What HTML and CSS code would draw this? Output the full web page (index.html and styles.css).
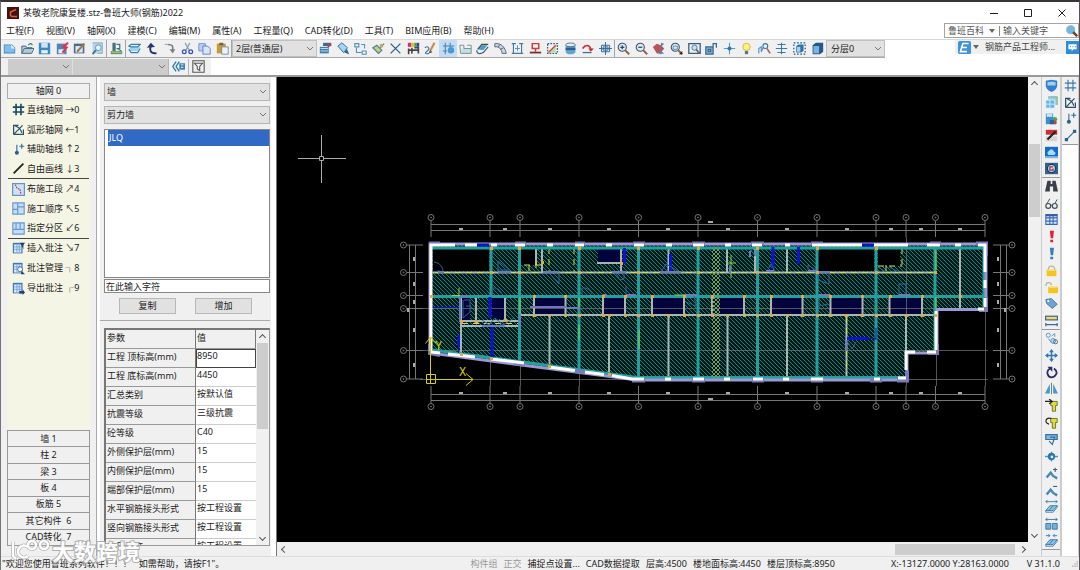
FILE: index.html
```html
<!DOCTYPE html>
<html lang="zh-CN">
<head>
<meta charset="utf-8">
<title>某敬老院康复楼.stz-鲁班大师(钢筋)2022</title>
<link rel="stylesheet" href="styles.css">
</head>
<body>
<div class="app">
  <header class="titlebar">
    <svg class="app-logo" viewBox="0 0 12 12" aria-hidden="true"><rect width="12" height="12" fill="#3a1713"/><path d="M9 2.500L3.500 5v3.500L5 9.500h5" fill="none" stroke="#f0562f" stroke-width="1.500"/></svg>
    <h1 class="title">某敬老院康复楼.stz-鲁班大师(钢筋)2022</h1>
    <div class="window-buttons">
      <button class="win" aria-label="最小化"><svg viewBox="0 0 10 10"><path d="M1 5.500h8"/></svg></button>
      <button class="win" aria-label="最大化"><svg viewBox="0 0 10 10"><path d="M1.500 1.500h7v7h-7z"/></svg></button>
      <button class="win" aria-label="关闭"><svg viewBox="0 0 10 10"><path d="M1.500 1.500l7 7m0-7l-7 7"/></svg></button>
    </div>
  </header>

  <div class="menu-row">
    <nav class="menu">
      <button>工程(F)</button><button>视图(V)</button><button>轴网(X)</button><button>建模(C)</button><button>编辑(M)</button><button>属性(A)</button><button>工程量(Q)</button><button>CAD转化(D)</button><button>工具(T)</button><button>BIM应用(B)</button><button>帮助(H)</button>
    </nav>
    <form class="search">
      <button type="button" class="search-kind">鲁班百科<span class="tri"></span></button>
      <input class="search-input" aria-label="输入关键字" placeholder="输入关键字">
      <button type="button" class="icon-btn" data-icon="search" aria-label="搜索"></button>
    </form>
  </div>

  <div class="tool-row">
    <div class="toolbar">
      <div class="group g-file">
        <button data-icon="new" aria-label="新建"></button><button data-icon="open" aria-label="打开"></button><button data-icon="save" aria-label="保存"></button><button data-icon="saveflash" aria-label="快速保存"></button><button data-icon="edit" aria-label="编辑"></button><button data-icon="preview" aria-label="预览"></button>
      </div>
      <div class="group g-one"><button data-icon="project" aria-label="工程"></button></div>
      <div class="group g-file">
        <button data-icon="layers" aria-label="图层"></button><button data-icon="undo" aria-label="撤销"></button><button data-icon="redo" aria-label="重做"></button><button data-icon="cut" aria-label="剪切"></button><button data-icon="copy" aria-label="复制"></button><button data-icon="paste" aria-label="粘贴"></button>
      </div>
      <select class="floor" aria-label="楼层"><option>2层(普通层)</option></select>
      <div class="group g-edit">
        <button data-icon="props" aria-label="属性"></button><button data-icon="tag" aria-label="标签"></button><button data-icon="flow" aria-label="关系"></button><button data-icon="brush" aria-label="格式刷"></button><button data-icon="cross" aria-label="删除"></button><button data-icon="palette" aria-label="颜色"></button><button data-icon="pencil" aria-label="绘制"></button><button class="on" data-icon="gridshape" aria-label="轴网"></button><button data-icon="slab" aria-label="板"></button><button data-icon="book" aria-label="图集"></button><button data-icon="fan" aria-label="弧形"></button><button data-icon="beam" aria-label="梁"></button><button data-icon="stamp" aria-label="柱"></button><button data-icon="region" aria-label="区域"></button><button data-icon="barrel" aria-label="数据"></button><button data-icon="arcarrow" aria-label="旋转"></button><button data-icon="target" aria-label="定位"></button>
      </div>
      <div class="group g-view">
        <button data-icon="zoomin" aria-label="放大"></button><button data-icon="zoomout" aria-label="缩小"></button><button data-icon="hand" aria-label="平移"></button><button data-icon="zoomwin" aria-label="窗口缩放"></button><button data-icon="zoompart" aria-label="全图"></button><button data-icon="unlock" aria-label="解锁"></button><button data-icon="point" aria-label="点"></button><button data-icon="bulb" aria-label="显示"></button><button data-icon="find" aria-label="查找"></button><button data-icon="axis" aria-label="轴线"></button><button data-icon="boxdash" aria-label="局部"></button><button data-icon="box" aria-label="三维"></button>
      </div>
      <select class="layer" aria-label="分层"><option>分层0</option></select>
    </div>
    <div class="account">
      <span class="icon-btn" data-icon="elogo"></span><span class="tri"></span>
      <a href="#" class="account-name">钢筋产品工程师...</a>
      <button class="icon-btn" data-icon="chat" aria-label="消息"></button>
    </div>
  </div>

  <div class="filter-row">
    <select class="off short" disabled aria-label="构件大类"></select><select class="off" disabled aria-label="构件小类"></select>
    <button class="filter-btn" data-icon="collapse" aria-label="收起"></button>
    <button class="filter-btn" data-icon="funnel" aria-label="筛选"></button>
  </div>

  <main class="work">
    <aside class="side">
      <button class="cat">轴网 0</button>
      <ul class="cmds">
        <li><button><i data-icon="hash"></i>直线轴网 →0</button></li>
        <li><button><i data-icon="arcgrid"></i>弧形轴网 ←1</button></li>
        <li><button><i data-icon="aux"></i>辅助轴线 ↑2</button></li>
        <li class="rule"><button><i data-icon="freeline"></i>自由画线 ↓3</button></li>
        <li><button><i data-icon="section"></i>布施工段 ↗4</button></li>
        <li><button><i data-icon="order"></i>施工顺序 ↖5</button></li>
        <li class="rule"><button><i data-icon="zone"></i>指定分区 ↙6</button></li>
        <li><button><i data-icon="note1"></i>插入批注 ↘7</button></li>
        <li><button><i data-icon="note2"></i>批注管理 ┐8</button></li>
        <li><button><i data-icon="note3"></i>导出批注 ┌9</button></li>
      </ul>
      <div class="cats">
        <button class="cat">墙 1</button><button class="cat">柱 2</button><button class="cat">梁 3</button><button class="cat">板 4</button><button class="cat">板筋 5</button><button class="cat">其它构件&nbsp; 6</button><button class="cat">CAD转化&nbsp; 7</button>
      </div>
    </aside>

    <section class="panel">
      <div class="panel-top">
        <select class="combo" aria-label="构件"><option>墙</option></select>
        <select class="combo" aria-label="类型"><option>剪力墙</option></select>
        <ul class="list"><li class="picked">JLQ</li></ul>
        <input class="name-input" aria-label="构件名称" value="在此输入字符">
        <div class="actions"><button>复制</button><button>增加</button></div>
      </div>
      <div class="params">
        <table>
          <thead><tr><th>参数</th><th>值</th></tr></thead>
          <tbody>
            <tr class="current"><th>工程 顶标高(mm)</th><td>8950</td></tr>
            <tr><th>工程 底标高(mm)</th><td>4450</td></tr>
            <tr><th>汇总类别</th><td>按默认值</td></tr>
            <tr><th>抗震等级</th><td>三级抗震</td></tr>
            <tr><th>砼等级</th><td>C40</td></tr>
            <tr><th>外侧保护层(mm)</th><td>15</td></tr>
            <tr><th>内侧保护层(mm)</th><td>15</td></tr>
            <tr><th>端部保护层(mm)</th><td>15</td></tr>
            <tr><th>水平钢筋接头形式</th><td>按工程设置</td></tr>
            <tr><th>竖向钢筋接头形式</th><td>按工程设置</td></tr>
            <tr><th>定尺长度</th><td>按工程设置</td></tr>
          </tbody>
        </table>
        <div class="vbar"><span class="chev up"></span><span class="thumb t-params"></span><span class="chev down"></span></div>
      </div>
    </section>

    <section class="view">
      <div class="canvas-row">
        <svg class="canvas" viewBox="277 77 751 464" preserveAspectRatio="xMinYMin meet">
          <defs>
            <pattern id="hatch" width="4" height="4" patternUnits="userSpaceOnUse"><rect width="4" height="4" fill="#021817"/><path d="M-1 -1L5 5M-1 3L1 5M3 -1L5 1" stroke="#11857e" stroke-width="1"/></pattern>
            <pattern id="mesh" width="4" height="4" patternUnits="userSpaceOnUse"><path d="M0 0L4 4M4 0L0 4" stroke="#6f9c68" stroke-width="1"/></pattern>
          </defs>
          <g id="axes" class="axes"></g>
          <path class="floor-area" d="M431 245H986V309H936V352H906V379H637L431 352Z"/>
          <path class="void" d="M433 249H489V271H433ZM521 249H536V265H521ZM818 249H874V271H818ZM878 249H900V266H878Z"/>
          <path class="navy" d="M598 248H620V263H598ZM461 297H470V321H461ZM492 297H504V319H492ZM534 297H565V314H534ZM603 297H625V314H603ZM653 297H683V314H653ZM719 297H743V314H719ZM772 297H802V314H772ZM831 297H862V314H831ZM890 297H921V314H890Z"/>
          <path class="grid-over" d="M420 308.500H988M420 350.500H988M420 379.500H988M490.500 360V386M520.500 365V386M579.500 372V386M906.500 237V386M936.500 310V386M985.500 310V386"/>
          <path class="wall" d="M433 272.500H935M520 315H935M549.500 315V367M609 315V375M668.500 315V378M727.500 315V378M787 315V378M846.500 315V378M906 315V352M960 247V308M461 297V355M536 247V265M542 247V272M621 247V272M597 263H621M668.500 247V272M727 247V272M755 247V272M787 247V272M461 321H520M461 326H520M476 297V321M505 297V320M534 297V315M565.500 297V315M603 297V315M625 297V315M652 297V315M684 297V315M712 297V315M744 297V315M771 297V315M802.500 297V315M830.500 297V315M862.500 297V315M889.500 297V315M922 297V315"/>
          <path class="dash" d="M433 272.500H935M462 323.500H518M574 248V272M549 248V272M902 248V268M935 248V272M878 266H902M886 265V273M536 262V272M529 265V272M846.500 317V374M524 265H542M431 297V345"/>
          <path class="teal" d="M432 248H984M432 296.500H984M491 247V298M519.500 247V362M579 247V370M638.500 247V378M698 247V378M757.500 247V378M817 247V378M876 247V378M935 247V352M984 247V306M638 377.500H905M433 350L637 377.500"/>
          <path class="lime" d="M579 298V308M579 325V340M639 330V349M520 297V318M936 250V270M936 297V308M459 288V297M452 295.500H461M675 295H684M731 255V278M726 263H736"/>
          <rect class="mesh" x="712" y="247" width="8" height="131"/>
          <path class="blue" d="M624.500 248V264M670.500 254V271M773 247V269M798.500 247V264M847 338.500H868M458.500 335V346M490 297V318M492 325V358"/>
          <path class="blue thin" d="M433 307.500H458M868 338.500H876M876 328V340M458.500 346V353"/>
          <path class="door" d="M434 272A10 10 0 0 1 443 272M434 262C440 263 443 267 443 272M498 272V261L510 270H498M548 272L559 284V272M492 294V288A9 9 0 0 1 502 294M582 294V288A9 9 0 0 1 592 294M626 296V286L635 295M615 272L620 280L624 279V272M661 272L666 264L678 271M683 295H694L696 306L686 302M730 272V264M751 250L755 256V250M767 271L771 264L775 271M808 270V265L816 270M818 272V280L829 284V272M819 298V306L828 304M899 295V284L906 284V294M847 341L852 349L856 342M878 267L886 272M889 267L899 272M464 300H470V312L463 318V300M466 306H471M482 320L489 325L495 318L503 325L514 318"/>
          <path class="violet" d="M460 296V322M460 296H468M438 272H444M498 272H511M543 272H558M603 295H607M612 272H626M660 272H681M626 295H636M683 295H697M530 307H567M567 308H580M750 251V257M766 271H774M808 271H817M819 295H830M899 295H910M846 340V351M520 314V326M817 272H830M482 326H505M730 266V274"/>
          <path class="outer" d="M430 244H986V309.500H937V353H907V380H637L430 353Z"/>
          <path class="outer-thick" d="M429 243.500H440M515 243.500H526M575 243.500H585M633 243.500H645M692 243.500H705M751 243.500H764M811 243.500H823M930 243.500H941M976 243.500H986V256M986 297V310H979M430 344V353L440 355M514 363L525 365M574 371L585 372M632 380.500H645M692 380.500H705M752 380.500H764M811 380.500H823M870 380.500H882M897 380.500H907V371M937 344V353H928"/>
          <path class="outer-core" d="M431 351V245H455M465 245H477M491 245H497M515 245H525M547 245H553M575 245H584M606 245H612M634 245H644M666 245H672M693 245H704M725 245H731M752 245H762M785 245H790M812 245H862M873 245H908M927 245H940M955 245H961M978 245H985V272M985 280V288M985 298V307M978 309H984M936 311V350M936 352H927M915 352H906V370M906 378H898M880 379H874M823 379H811M789 379H783M763 379H753M730 379H724M704 379H693M671 379H665M644 379H632L612 375.500M604 374.500L585 372M575 370.500L549 367M524 363L491 359M475 357L448 354M440 353L431 352"/>
          <path class="blue" d="M477 245H489M862 245H874"/>
          <g id="joints" class="joints"></g>
          <g class="ucs"><path d="M426.500 374.500H435.500V383.500H426.500ZM430.500 383V337M427 379.500H473M466 373.500L473 379.500L466 385.500M425.500 343.500L430.500 337L436.500 343.500"/><text x="459" y="376">X</text><text x="435" y="350">Y</text></g>
          <path class="cursor" d="M298 158.500H319M324 158.500H346M321.500 135V156M321.500 161V183M319.500 156.500H323.500V160.500H319.500Z"/>
        </svg>
        <div class="vbar"><span class="chev up"></span><span class="thumb t-view"></span><span class="chev down"></span></div>
      </div>
      <div class="hbar"><span class="chev left"></span><span class="thumb"></span><span class="chev right"></span></div>
    </section>

    <div class="rail">
      <div class="rail-group six">
        <button data-icon="shield" aria-label="云检查"></button><button data-icon="windows" aria-label="窗口"></button><button data-icon="dbcheck" aria-label="数据库"></button><button data-icon="redpen" aria-label="批注"></button><button data-icon="cloud" aria-label="云"></button><button data-icon="refresh" aria-label="更新"></button>
      </div>
      <div class="rail-group nine">
        <button data-icon="binoc" aria-label="查找"></button><button data-icon="glasses" aria-label="查看"></button><button data-icon="table" aria-label="表格"></button><button data-icon="exclred" aria-label="计算"></button><button data-icon="exclblue" aria-label="单构件计算"></button><button data-icon="lock" aria-label="锁定"></button><button data-icon="lockopen" aria-label="解锁"></button><button data-icon="label" aria-label="标签"></button><button data-icon="ruler" aria-label="测量"></button>
      </div>
      <div class="rail-group thirteen">
        <button data-icon="circles" aria-label="复制"></button><button data-icon="move" aria-label="移动"></button><button data-icon="rotate" aria-label="旋转"></button><button data-icon="mirror" aria-label="镜像"></button><button data-icon="extend" aria-label="延伸"></button><button data-icon="trim" aria-label="修剪"></button><button data-icon="offset" aria-label="偏移"></button><button data-icon="node" aria-label="节点"></button><button data-icon="addnode" aria-label="加节点"></button><button data-icon="delnode" aria-label="减节点"></button><button data-icon="stretch" aria-label="拉伸"></button><button data-icon="split" aria-label="打断"></button><button data-icon="merge" aria-label="合并"></button>
      </div>
    </div>
    <div class="rail second">
      <div class="rail-group four">
        <button data-icon="hashblue" aria-label="直线轴网"></button><button data-icon="arcgrid" aria-label="弧形轴网"></button><button data-icon="aux" aria-label="辅助轴线"></button><button data-icon="segment" aria-label="自由画线"></button>
      </div>
    </div>
  </main>

  <footer class="status">
    <span class="hint">"欢迎您使用鲁班系列软件！！！&nbsp;&nbsp; 如需帮助，请按F1"。</span>
    <div class="fields">
      <span class="dim">构件组</span><span class="dim">正交</span><span>捕捉点设置...</span><span>CAD数据提取</span><span>层高:4500</span><span>楼地面标高:4450</span><span>楼层顶标高:8950</span>
    </div>
    <span class="coords">X:-13127.0000 Y:28163.0000</span>
    <span class="version">V 31.1.0</span>
    <svg class="grip" viewBox="0 0 8 8"><path d="M6 0h2v2H6zM3 3h2v2H3zM6 3h2v2H6zM0 6h2v2H0zM3 6h2v2H3zM6 6h2v2H6z" fill="#bbb"/></svg>
  </footer>

  <div class="watermark" aria-hidden="true">
    <svg viewBox="0 0 42 22"><g fill="none" stroke="#aaa" stroke-width="4"><path d="M3 3v14l3 3M18 8a6 6 0 1 0 0 9"/><circle cx="22" cy="6" r="4"/><circle cx="34" cy="6" r="4"/></g><g fill="none" stroke="#fff" stroke-width="2.500"><path d="M3 3v14l3 3M18 8a6 6 0 1 0 0 9"/><circle cx="22" cy="6" r="4"/><circle cx="34" cy="6" r="4"/></g></svg>
    <span>大数跨境</span>
  </div>
</div>
<script src="app.js"></script>
</body>
</html>
```
FILE: styles.css
```css
* { box-sizing: border-box; }
html, body { height: 100%; margin: 0; }
body { font: 9px/12px "Noto Sans", "Noto Sans CJK SC", sans-serif; color: #222; background: #fff; overflow: hidden; }
button, input, select { font: inherit; color: inherit; margin: 0; padding: 0; border: 0; background: none; border-radius: 0; }
ul { list-style: none; margin: 0; padding: 0; }
svg { display: block; }

.app { position: relative; height: 100vh; display: flex; flex-direction: column; border-top: 2px solid #37343a; border-left: 1px solid #77727a; border-right: 1px solid #55525a; }

.titlebar { flex: 0 0 21px; display: flex; align-items: center; gap: 4px; padding-left: 6px; }
.app-logo { width: 12px; height: 12px; }
.title { font: inherit; margin: 0; flex: 1; }
.window-buttons { display: flex; gap: 14px; padding-right: 7px; }
.win { width: 20px; height: 18px; display: grid; place-items: center; }
.win svg { width: 10px; height: 10px; fill: none; stroke: #222; stroke-width: 1; }

.menu-row { flex: 0 0 16px; display: flex; justify-content: space-between; }
.menu { display: flex; gap: 12px; padding-left: 5px; }
.menu button { white-space: nowrap; }
.search { display: flex; align-items: center; width: 135px; height: 15px; border: 1px solid #a5a5a5; color: #555; background: #fff; }
.search-kind { display: flex; align-items: center; gap: 5px; padding: 0 4px 0 3px; border-right: 1px solid #888; height: 10px; }
.tri { border: 3px solid transparent; border-top: 4px solid #666; border-bottom: 0; }
.search-input { flex: 1; min-width: 0; padding-left: 3px; outline: 0; }
.search-input::placeholder { color: #555; opacity: 1; }
.icon-btn { width: 14px; height: 13px; flex: none; display: grid; place-items: center; }

.tool-row { flex: 0 0 19px; display: flex; justify-content: space-between; align-items: flex-start; border-top: 1px solid #d8d8d8; }
.toolbar { display: flex; height: 18px; background: #f0f0f0; border-bottom: 1px solid #a8a8a8; }
.group { display: flex; border-right: 1px solid #a5a5a5; }
.group button { flex: 1; display: grid; place-items: center; }
.group .on { background: #c3dcf5; }
.g-file { width: 106px; }
.g-one { width: 19px; }
.g-edit { width: 298px; }
.g-view { width: 211px; border-right: 0; }
.toolbar svg, .icon-btn svg { width: 13px; height: 13px; }

select { appearance: none; background: #e1e1e1 url("data:image/svg+xml,%3Csvg xmlns='http://www.w3.org/2000/svg' width='8' height='6'%3E%3Cpath d='M1 1l3 3 3-3' fill='none' stroke='%23777'/%3E%3C/svg%3E") no-repeat right 2px center; }
.floor { width: 85px; height: 17px; padding-left: 3px; border: 1px solid #c0c0c0; }
.layer { width: 59px; height: 17px; padding-left: 4px; border: 1px solid #c0c0c0; }
.account { display: flex; align-items: center; gap: 2px; width: 124px; height: 14px; background: #f0f0f0; padding-left: 2px; }
.account-name { flex: 1; color: #444; text-decoration: none; white-space: nowrap; padding-left: 4px; }

.filter-row { flex: 0 0 19px; display: flex; align-items: center; padding-left: 7px; border-bottom: 2px solid #999; background: linear-gradient(90deg, #f0f0f0 210px, #fff 210px); }
.off { width: 95px; height: 16px; background-color: #ccc; opacity: 1; }
.off.short { width: 65px; border-right: 1px solid #ddd; }
.filter-btn { width: 20px; height: 16px; border-left: 1px solid #b5b5b5; display: grid; place-items: center; }
.filter-btn svg { width: 13px; height: 13px; }

.work { flex: 1; min-height: 0; display: flex; }
.side { flex: 0 0 96px; display: flex; flex-direction: column; padding: 6px 6px 10px 6px; background: #f0f0f0; border-right: 1px solid #aaa; }
.cat { border: 1px solid #999; border-width: 0 1px 1px 0; background: #f0f0f0; text-align: center; min-height: 0; line-height: 12px; }
.side > .cat { flex: 0 0 16px; border: 1px solid #aaa; }
.cmds { flex: 1; background: #f5f5e6; display: grid; align-content: start; padding: 1px 1px 0; grid-template-rows: repeat(10, 6%); }
.cmds li { display: flex; align-items: center; }
.cmds .rule { border-bottom: 1px solid #444; }
.cmds button { display: flex; align-items: center; gap: 2px; padding-left: 4px; white-space: nowrap; }
.cmds svg { width: 13px; height: 13px; }
.cats { flex: 0 0 116px; display: grid; grid-template-rows: repeat(7, 1fr); border: 1px solid #999; border-width: 1px 0 0 1px; }

.panel { flex: 0 0 180px; display: flex; flex-direction: column; padding: 4px 6px 10px 3px; background: linear-gradient(90deg, #fff 3px, #f0f0f0 3px, #f0f0f0 174px, #fff 174px); border-right: 1px solid #777; }
.panel-top { display: flex; flex-direction: column; gap: 5px; padding: 2px 0 6px 4px; border-bottom: 1px solid #aaa; }
.combo { height: 18px; border: 1px solid #b5b5b5; padding-left: 2px; }
.list { height: 149px; border: 1px solid #888; background: #fff; padding-left: 3px; }
.picked { background: #316ac5; color: #fff; height: 16px; line-height: 16px; padding-left: 1px; }
.name-input { height: 14px; margin-top: -4px; border: 1px solid #888; background: #fff; padding-left: 1px; min-width: 0; }
.actions { display: flex; justify-content: space-between; padding: 0 18px 0 15px; }
.actions button { width: 57px; height: 16px; background: #e1e1e1; border: 1px solid #b8b8b8; }
.params { flex: 1; min-height: 0; display: flex; margin: 7px 0 0 4px; overflow: hidden; border: 2px solid #777; border-right: 1px solid #999; border-bottom: 1px solid #999; }
table { flex: 1; align-self: flex-start; border-collapse: separate; border-spacing: 0; table-layout: fixed; width: 0; }
th, td { font-weight: 400; text-align: left; vertical-align: top; line-height: 12px; padding: 2px 0 0 1px; height: 19px; white-space: nowrap; border-bottom: 1px solid #999; border-right: 1px solid #777; }
th:first-child { width: 60%; }
td { background: #fff; border-right: 0; border-bottom-color: #ccc; padding-top: 1px; }
.current td { border: 1px solid #444; padding: 0; }

.vbar { flex: 0 0 13px; display: flex; flex-direction: column; align-items: center; background: #f0f0f0; padding: 5px 0 5px; }
.vbar .thumb { width: 11px; background: #cdcdcd; }
.t-params { height: 86px; margin: 3px 0 auto; }
.t-view { height: 73px; margin: 57px 0 auto; }
.chev { width: 5px; height: 5px; flex: none; border: solid #555; border-width: 1px 0 0 1px; }
.up { transform: rotate(45deg); }
.down { transform: rotate(225deg); }
.left { transform: rotate(-45deg); }
.right { transform: rotate(135deg); }

.view { flex: 1; min-width: 0; display: flex; flex-direction: column; background: #f0f0f0; }
.canvas-row { flex: 1; min-height: 0; display: flex; }
.canvas { flex: 1; min-width: 0; height: 100%; background: #000; }
.hbar { flex: 0 0 14px; display: flex; align-items: center; padding: 0 16px 0 5px; }
.hbar .thumb { width: 120px; height: 11px; background: #cdcdcd; margin: 0 5px 0 auto; }

.rail { flex: 0 0 20px; background: #f0f0f0; border-left: 1px solid #ccc; border-right: 1px solid #ccc; }
.second { flex-basis: 18px; background: #fff; }
.rail-group { display: flex; flex-direction: column; background: #f0f0f0; border-bottom: 1px solid #999; }
.rail-group button { flex: 1; display: grid; place-items: center; min-height: 0; }
.rail svg { width: 13px; height: 13px; }
.six { height: 101px; }
.nine { height: 152px; }
.thirteen { height: 220px; }
.four { height: 68px; }

.status { flex: 0 0 14px; display: flex; align-items: center; background: #f0f0f0; border-top: 1px solid #ddd; white-space: nowrap; padding: 0 1px; }
.hint { flex: 1; }
.fields { display: flex; gap: 6px; margin-right: 56px; }
.dim { color: #999; }
.coords { margin-right: 18px; }
.version { margin-right: 12px; }
.grip { width: 6px; height: 6px; }

.floor-area { fill: url(#hatch); }
.void { fill: #000; }
.navy { fill: #03033c; }
.axes, .grid-over { fill: none; stroke: #777; stroke-width: 1; }
.grid-over { opacity: .7; }
.wall { fill: none; stroke: #a9b5b2; stroke-width: 2; }
.dash { fill: none; stroke: #d9d545; stroke-width: 1; stroke-dasharray: 6 5; }
.teal { fill: none; stroke: #21a09f; stroke-width: 3; }
.lime { fill: none; stroke: #7fdc48; stroke-width: 1; }
.mesh { fill: url(#mesh); }
.blue { fill: none; stroke: #0b12d0; stroke-width: 3; }
.thin { stroke-width: 1; }
.door { fill: none; stroke: #2c6798; stroke-width: 1; }
.violet { fill: none; stroke: #7378bd; stroke-width: 2; }
.outer { fill: none; stroke: #9b98d4; stroke-width: 3; }
.outer-thick { fill: none; stroke: #7b79b9; stroke-width: 4; }
.outer-core { fill: none; stroke: #fff; stroke-width: 3; }
.joints { fill: #e4a64b; }
.ucs { fill: none; stroke: #d2d000; stroke-width: 1; }
.ucs text { font: 12px "Liberation Mono", monospace; fill: #d2d000; stroke: none; }
.cursor { fill: none; stroke: #aaa; stroke-width: 1; }

.watermark { position: absolute; left: 9px; bottom: 8px; display: flex; align-items: center; opacity: .9; font: 700 22px/24px "Noto Sans CJK SC", sans-serif; color: #fff; -webkit-text-stroke: 2px #aaa; paint-order: stroke fill; }
.watermark svg { width: 42px; height: 22px; }
```
FILE: app.js
```js
const B = '#2a6fa8', L = '#8cc4ea';
const line = (d, c = B, w = 1.5) => `<path d="${d}" fill="none" stroke="${c}" stroke-width="${w}"/>`;
const fill = (d, c = B) => `<path d="${d}" fill="${c}"/>`;
const lens = (x, y, r = 4.5) => `<circle cx="${x}" cy="${y}" r="${r}" fill="#d9ecf8" stroke="#44525e" stroke-width="1.3"/>` + line(`M${x + 3.5} ${y + 3.5}L15 15`, '#8a6248', 2.4);
const sheet = fill('M1 1h12v13H1z', '#3f76bf') + fill('M2.500 3h9v10h-9z', '#dceafa') + line('M2 6h10M2 9h10M6 3v10M9 3v10', '#6d9bd8', 1);
const slab3d = fill('M1 13L6 7H15L10 13Z', L) + line('M1 13L6 7H15L10 13ZM1 13v2h9l5-6V7M5 13l5-6', B, 1);
const padlock = fill('M2 7h12v8H2z', '#f6c321') + line('M3 8h10', '#ffe37a', 1);

const icons = {
  new: fill('M1 3h10l4 4v7H1z', '#3f8ac2') + fill('M2 4h8l4 4v5H2z', '#7fbfe9') + fill('M10 3v5h5z', '#d9edf8'),
  open: fill('M1 5h5l1 2h7v7H2z', '#b5c8d6') + line('M1 14V5h5l1 2h7M1 14l3-6h12l-3 6z', '#486c85', 1.2) + line('M9 4c2-3 4-2 5 0', '#2a8059'),
  save: fill('M1 1h13l1 1v13H1z', '#3c87c4') + fill('M4 1h8v6H4z', '#cfe4f4') + fill('M4 10h8v4H4z', '#e8eef2'),
  saveflash: fill('M1 2h12v13H1z', '#4a88ba') + fill('M3 9h7v5H3z', '#e8eef2') + line('M15 1L9 6l4 1-5 6', '#e8304a', 2.4),
  edit: fill('M1 2h13v12H1z', '#4b6c8a') + fill('M3 5h9v8H3z', '#dce8f0') + line('M14 2L5 12', '#a4733f', 2.4),
  preview: fill('M2 1h12v13H2z', '#b9d3e6') + line('M2 1h12v13H8', '#7fa3be', 1) + '<circle cx="9" cy="7" r="3.500" fill="#e8f5fc" stroke="#3d86b8"/>' + line('M6 10L2 15', '#4a7796', 2.4),
  project: fill('M3 1h4v10H3z', '#47707f') + fill('M1 11h14v4H1z', '#5b9a78') + line('M8 3h4v5H8M9 8l5 3', '#337e7d', 1.5) + line('M2 12.500h12', '#e9d65a', 1),
  layers: fill('M1 9l3-3h11l-3 5H3z', '#9fd4ee') + line('M1 5l3-2h11l-3 3H3zM1 9l3 4h8l3-5', '#2f80ae', 1.4),
  undo: line('M13 14C5 14 4 10 6 5', '#22386a', 2.4) + fill('M1 7l5-6 5 5z', '#22386a'),
  redo: line('M6 3c7 0 6 3 6 8', '#7b7f83', 2) + fill('M8 9h7l-3 5z', '#7b7f83') + line('M2 3h4', '#a9adb0'),
  cut: line('M5 1l5 9M11 1L6 10', '#8da5ba', 1.6) + '<circle cx="4" cy="12" r="2.300" fill="none" stroke="#2f54b5" stroke-width="1.600"/><circle cx="12" cy="12" r="2.300" fill="none" stroke="#2f54b5" stroke-width="1.600"/>',
  copy: fill('M1 2h8v9H1z', '#b9cff3') + line('M1 2h8v9H1z', '#6688cc', 1) + fill('M6 5h6l3 3v7H6z', '#d8e5fb') + line('M6 5h6l3 3v7H6z', '#4d72be', 1),
  paste: fill('M1 2h11v12H1z', '#c99b34') + fill('M4 1h5v3H4z', '#75653a') + fill('M7 6h8v9H7z', '#eef3fb') + line('M7 6h8v9H7z', '#6b7fa8', 1),
  props: fill('M5 1h10v4H5z', '#5b5f80') + fill('M1 6h11v8H1z', '#3c81b5') + line('M2 8h9M2 11h9', '#d6eaf7', 1) + line('M11 6l4-3', '#b5404a', 2),
  tag: fill('M1 5l5-4 6 6-4 6z', '#a8d2ee') + line('M1 5l5-4 7 6-5 6z', '#3274a3', 1.2) + fill('M12 8l3 7-6-2z', '#2c6795'),
  flow: line('M1 2h5v4H1zM10 11h5v4h-5zM9 3h4v5M3 7v6h6', '#4e91bd', 1.3),
  brush: fill('M1 7l5-3 6 6-4 4z', '#b7d67d') + line('M1 7l5-3 6 6-4 4zM10 7l5-5', '#567f95', 1.5) + fill('M9 3l3-1 2 4-3 1z', '#c7a75a'),
  cross: line('M2 2l12 12M14 2L2 14', '#265c8b', 1.5),
  palette: fill('M1 1h4v5H1z', '#d02d84') + fill('M5 1h4v5H5z', '#e9ba24') + fill('M9 1h3v5H9z', '#4b9f43') + fill('M12 1h3v5h-3z', '#2446bf') + line('M2 8v7M6 7v7M9 7h5v7M3 10h10', '#4a4247', 2),
  pencil: line('M1 7c4-3 7 1 3 4s-2 4 2 3', '#3c7aa3', 1.4) + line('M13 1L8 10', '#cc8a4b', 2.6) + line('M8 10l-1 3 3-1', '#45494b', 1.4),
  gridshape: line('M4 1v14M1 5h14M1 11h5M10 1v5', '#4b7fae', 1.3) + '<circle cx="11" cy="10" r="4" fill="#4a9ad4"/>',
  slab: fill('M3 8h12v6H3z', '#c6dde2') + line('M1 4h5v4h9v6H2zM10 4h5v4', '#719696', 1.2),
  book: fill('M3 7l5-5h7l-5 6z', '#f0c847') + fill('M2 9l5-5h7l-5 6z', '#4c9ac8') + line('M1 10c0 5 4 5 8 3l6-7M2 9l5-6h8', '#37586a', 1.4),
  fan: fill('M1 2c8-1 13 5 14 12h-5C9 8 6 5 1 6z', '#cdd7e0') + line('M1 2c8-1 13 5 14 12h-5C9 8 6 5 1 6zM7 3L5 7M12 7L8 9', '#55697d', 1.2),
  beam: line('M1 2h5M10 2h5M1 14h14M3 2v12M13 2v12', '#4279a8', 1.4) + line('M5 8h6M8 4v7', '#5f8fb8', 1.2),
  stamp: line('M4 2h8v6H4zM8 8v4', '#d23b3b', 1.8) + line('M1 13h14', '#71323b', 2.2),
  region: '<path d="M2 2h12v12H2z" fill="none" stroke="#2b5c8a" stroke-width="1.500" stroke-dasharray="2 1.500"/>' + fill('M3 13L12 4v9z', '#b6e39b') + line('M3 13L12 4', '#d13e35', 1.6),
  barrel: fill('M2 3h12v10l-3 2H5l-3-2z', '#5da7d8') + '<ellipse cx="8" cy="3.500" rx="6" ry="2.300" fill="#e2eef5" stroke="#4a6476"/>' + fill('M2 7h12v3H2z', '#2c5d8d'),
  arcarrow: line('M2 8c4-6 9-4 10 1', '#c4302f', 2) + fill('M9 8h7l-4 4z', '#c4302f') + line('M2 13h11', '#3b6d94', 1.5),
  target: line('M3 4h10v8H3zM8 0v16M0 8h16M5 6h6v4H5z', '#336e9e', 1.2),
  zoomin: lens(6.5, 6.5, 5) + line('M4 6.500h5M6.500 4v5', '#2c4961', 1.5),
  zoomout: lens(6.5, 6.5, 5) + line('M4 6.500h5', '#2c4961', 1.5),
  hand: fill('M1 6l5-4 5 2 4 4-5 6H6z', '#b4565b') + fill('M11 1l4 1-4 4zM10 10l5 4-6 1z', '#4c8abd'),
  zoomwin: lens(6.5, 6.5, 5) + line('M4 5h5v4H4z', '#3b82b4', 1) + fill('M15 11v4h-4z', '#222'),
  zoompart: line('M1 2h14v12H1z', '#345f87', 1.6) + '<circle cx="8" cy="7" r="3.300" fill="#c9dfee" stroke="#3c6d94"/>' + line('M10 9l4 5', '#6d5d58', 2),
  unlock: fill('M1 6h9v9H1z', '#8fb0c7') + line('M1 6h9v9H1zM4 9h3v3H4zM10 6V2h4v5', '#2d6b9c', 1.5),
  point: line('M8 1v14M1 8h14', '#5a9bc7', 1.4) + '<circle cx="8" cy="8" r="2.500" fill="#2879ae"/>',
  bulb: '<circle cx="8" cy="6" r="4.500" fill="#fff27c" stroke="#c7b03a"/>' + fill('M6 11h4v4H6z', '#607383'),
  find: line('M1 14V8l3-2v6l3-6', '#5691be', 1.4) + '<circle cx="9" cy="5" r="3" fill="#e7f3fb" stroke="#3a78a6" stroke-width="1.400"/>' + line('M11 8l4 6', '#a36767', 2),
  axis: line('M8 1v14M3 3h10M1 8h14M3 13h10', '#3e779f', 1.3),
  boxdash: '<path d="M1 1h14v14H1z" fill="none" stroke="#24578b" stroke-width="1.500" stroke-dasharray="2 2"/>' + fill('M4 5l3-2h6v8l-3 2H4z', '#2f71aa') + fill('M5 6h4v6H5z', '#a9d2ef'),
  box: fill('M2 4l4-3h9v11l-4 3H2z', '#28568b') + fill('M3 5h7v9H3z', '#76b5e3'),
  search: '<circle cx="7" cy="7" r="5" fill="#6fb8e1" stroke="#8daabd"/>' + line('M10 10l5 5', '#6f3f2c', 3),
  elogo: '<rect width="16" height="16" rx="2" fill="#3d93dd"/>' + line('M13 3H6L3 13h8M5 8h6', '#fff', 2),
  chat: '<rect width="16" height="16" fill="#2f8bdc"/>' + fill('M3 4h10v6H9l-2 3v-3H3z', '#fff') + line('M5 7h1M8 7h1M11 7h1', '#2f8bdc', 1.4),
  collapse: line('M5 2L1 8l4 6M9 2L5 8l4 6', '#2278ad', 1.6) + fill('M9 4h7v8H9z', '#3b83b8') + line('M11 6h3M11 9h3', '#fff', 1),
  funnel: line('M1 1h14v14H1zM3 4h10L9.500 8v5l-3-2V8z', '#555', 1.3),
  hash: line('M5 1v14M11 1v14M1 5h14M1 11h14', '#164a68', 2),
  hashblue: line('M5 1v14M11 1v14M1 5h14M1 11h14', '#3c79a9', 1.4),
  arcgrid: line('M2 14V3h6M2 14h12V8M3 13L13 3M4 4c5 1 7 4 8 8', '#26516b', 1.5),
  aux: line('M6 2v9M9 4h6M12 1v6', '#356d98', 1.4) + '<circle cx="6" cy="12" r="2.500" fill="#28618f"/>',
  freeline: line('M2 14L14 2', '#222', 2.2),
  segment: line('M3 13L13 3', '#356a9a', 1.5) + fill('M1 11h4v4H1zM11 1h4v4h-4z', '#28618f'),
  section: fill('M0 0h16v16H0z', '#6293ca') + fill('M1.500 1.500h13v13h-13z', '#cfe1f6') + '<path d="M4 2l2 4 4 2 1 6" fill="none" stroke="#c22929" stroke-width="1.300" stroke-dasharray="2 1"/>',
  order: fill('M1 1h14v14H1z', '#c7def8') + line('M1 1h14v14H1zM7 1v14M7 6h8M1 9h6', '#6697d2', 1.4),
  zone: fill('M1 1h14v14H1z', '#c7def8') + line('M1 1h14v14H1zM1 9h14M5 1v8M10 1v8', '#6697d2', 1.4),
  note1: sheet + fill('M10 1h6l-2 3v5z', '#21416c'),
  note2: sheet + '<circle cx="10" cy="9" r="3" fill="#fff" stroke="#3864a0"/>' + fill('M12 11l4 4h-5z', '#21416c'),
  note3: sheet + fill('M9 11h4v-2l3 4-3 3v-2H9z', '#21416c'),
  shield: fill('M1 2l7-1 7 1v6c0 4-4 7-7 8-3-1-7-4-7-8z', '#2f80ce') + fill('M3 4l5-1 5 1v4H3z', '#9ed0f4'),
  windows: fill('M4 1h11v10H4z', '#8bd0ed') + fill('M1 5h11v10H1z', '#66b5e0') + line('M1 5h11v10H1zM1 10h11M6 5v10', '#dff3fb', 1) + line('M4 1h11v10', '#8a9e4c', 1),
  dbcheck: fill('M1 2h9v13H1z', '#3c8fcb') + fill('M2 2h7v4H2z', '#c7e4f5') + '<circle cx="12" cy="9" r="3" fill="#52a35b"/><circle cx="12" cy="13" r="2.500" fill="#c5403f"/>' + fill('M6 10h5v5H6z', '#2b5ba3'),
  redpen: fill('M1 1h14v6H1z', '#cb2d33') + fill('M1 9h14v6H1z', '#d7d3d3') + line('M13 3L3 13', '#222', 2.6),
  cloud: fill('M0 1h16v12H0z', '#176bc7') + fill('M3 9c0-3 3-3 4-5 3 0 4 2 4 3 3 0 2 4 0 4H4z', '#a5dcff') + fill('M0 13h16v2H0z', '#7cb6e6'),
  refresh: fill('M0 1h16v14H0z', '#35618f') + '<circle cx="8" cy="8" r="5" fill="#bce0f2" stroke="#163a5c" stroke-width="1.500"/>' + line('M10 6H6v4h4V8', '#a82e3c', 1.5),
  binoc: fill('M3 1h4v4h2V1h4l3 13h-6V8H6v6H0z', '#3b4048'),
  glasses: '<circle cx="4" cy="11" r="3" fill="none" stroke="#41525c" stroke-width="1.500"/><circle cx="12" cy="11" r="3" fill="none" stroke="#41525c" stroke-width="1.500"/>' + line('M7 10h2M2 9l4-7M12 8l3-5', '#41525c', 1.2),
  table: fill('M1 2h14v12H1z', '#d9e9fa') + line('M1 2h14v12H1zM1 6h14M1 10h14M6 2v12M10 2v12', '#3568b4', 1.3) + fill('M1 2h14v2H1z', '#355d9d'),
  exclred: fill('M6 1h5l-1 9H7zM6.500 12h3.500v3H6.500z', '#e02237'),
  exclblue: fill('M6 1h5l-1 9H7zM6.500 12h3.500v3H6.500z', '#2f80bd'),
  lock: line('M4 7c0-6 8-6 8 0', '#b6b6a5', 1.5) + padlock,
  lockopen: line('M1 6c0-5 6-5 7-1', '#b6b6a5', 1.5) + '<g transform="translate(2 0)">' + padlock + '</g>',
  label: fill('M1 3l7-1 7 7-6 5-7-6z', '#6fa3cd') + line('M1 3l7-1 7 7-6 5-7-6z', '#396b98', 1) + '<circle cx="4" cy="5" r="1.200" fill="#fff"/>',
  ruler: fill('M0 2h16v6H0z', '#48657c') + fill('M1.500 3.500h13v3h-13z', '#e9db76') + line('M1 13h14M1 11v4M15 11v4', '#316d9a', 1.5),
  circles: '<circle cx="4" cy="4" r="2.500" fill="none" stroke="#4787b7"/><circle cx="10" cy="11" r="3" fill="#b7d9ef" stroke="#4787b7"/><circle cx="13" cy="12" r="2.500" fill="none" stroke="#315d83"/>' + line('M8 5l4-3v4M4 8l3 4', '#4787b7', 1),
  move: line('M8 2v12M2 8h12', '#3078af', 1.8) + fill('M8 0l3 4H5zM8 16l3-4H5zM0 8l4-3v6zM16 8l-4-3v6z', '#3078af'),
  rotate: line('M11 3c7 5 1 11-3 11S0 7 6 3', '#2b2e6b', 2.2) + fill('M3 1h6v6z', '#2b2e6b'),
  mirror: fill('M6 2v12H0zM10 2v12h6z', '#4b97ca') + line('M8 1v14', '#476b84', 1),
  extend: fill('M7 3h8v5h-2v7h-4V8H7z', '#e0dc31') + line('M7 3h8v5h-2v7h-4V8H7z', '#6d7935', 1.2) + line('M0 3h8M5 0l4 3-4 3', '#222', 1.4),
  trim: fill('M7 3h8v5h-2v7h-4V8H7z', '#e0dc31') + line('M7 3h8v5h-2v7h-4V8H7z', '#6d7935', 1.2) + line('M8 3c-8-2-9 6-3 7', '#222', 1.4),
  offset: fill('M1 2h14v6H1z', '#85b9df') + line('M1 2h14v6H1zM6 5h6l-3 9-4-4', '#34739f', 1.5),
  node: line('M0 8h16M8 2v12', '#4e95c5', 1.6) + '<circle cx="8" cy="8" r="4.500" fill="#2b77ad"/>' + fill('M7 7h3v3H7z', '#d8effa'),
  addnode: line('M2 13l5-6 3 4 5 3', '#4689bb', 3) + line('M10 3h5M12.500 1v5', '#3a5973', 1.3),
  delnode: line('M2 13l5-6 3 4 5 3', '#4689bb', 3) + line('M10 3h5', '#3a5973', 1.3),
  stretch: slab3d + line('M1 2h14M3 0L1 2l2 2M13 0l2 2-2 2', '#3b7cab', 1.1),
  split: fill('M1 8h6v7H1zM9 8h6v7H9z', '#73b0da') + line('M1 8h6v7H1zM9 8h6v7H9zM1 3h14M3 1L1 3l2 2M13 1l2 2-2 2', '#37749f', 1.1),
  merge: slab3d + line('M1 2h5M10 2h5M4 0l2 2-2 2M12 0l-2 2 2 2', '#3b7cab', 1.1)
};

document.querySelectorAll('[data-icon]').forEach(el => {
  el.innerHTML = `<svg viewBox="0 0 16 16" aria-hidden="true">${icons[el.dataset.icon]}</svg>`;
});

// Axis bubbles and dimension chains around the floor plan.
const xs = [431, 490, 520, 579, 638.5, 698, 757.5, 817, 876, 906, 935.5, 985];
const ys = [245, 272.5, 295.5, 308.5, 350.5, 379];
const bubble = (x, y) => `<circle cx="${x}" cy="${y}" r="3"/><circle cx="${x}" cy="${y}" r="0.5"/>`;
let axes = '<path d="M431 224.500H985M431 230.500H985M431 394.500H985M431 400.500H985M409.500 245V379M415.500 245V379M1000.500 245V379M1006.500 245V379"/>';
xs.forEach(x => { axes += bubble(x, 217.5) + bubble(x, 406.5) + `<path d="M${x} 221V237M${x} 386V403"/>`; });
ys.forEach(y => { axes += bubble(403.5, y) + bubble(1012, y) + `<path d="M407 ${y}H423M993 ${y}H1009"/>`; });
for (let i = 0; i < xs.length - 1; i++) {
  const m = Math.round((xs[i] + xs[i + 1]) / 2);
  axes += `<path d="M${m - 2} 229h4M${m - 2} 393h4" stroke="#aaa" stroke-width="2"/>`;
}
for (let i = 0; i < ys.length - 1; i++) {
  const m = Math.round((ys[i] + ys[i + 1]) / 2);
  axes += `<path d="M414 ${m - 2}v4M998 ${m - 2}v4" stroke="#aaa" stroke-width="2"/>`;
}
axes += '<path d="M708 222h5M708 399h5M408 308v4M1005 308v4" stroke="#aaa" stroke-width="2"/>';
document.getElementById('axes').innerHTML = axes;

// Structural columns where walls and beams meet.
const joints = [];
[491, 519, 579, 638, 698, 757, 817, 876].forEach(x => joints.push([x, 272], [x, 248]));
[534, 549, 565, 579, 603, 609, 625, 638, 652, 668, 684, 698, 712, 727, 744, 757, 771, 787, 802, 817, 830, 846, 862, 876, 890, 906, 922, 935].forEach(x => joints.push([x, 315]));
[534, 565, 603, 625, 652, 684, 712, 744, 771, 802, 830, 862, 890, 922, 960, 431].forEach(x => joints.push([x, 296]));
[[621, 263], [542, 262], [461, 354], [491, 358], [549, 366], [609, 374], [935, 272], [476, 321], [505, 320], [461, 321]].forEach(p => joints.push(p));
document.getElementById('joints').innerHTML = joints.map(([x, y]) => `<rect x="${x - 1}" y="${y - 1}" width="3" height="3"/>`).join('');
```
